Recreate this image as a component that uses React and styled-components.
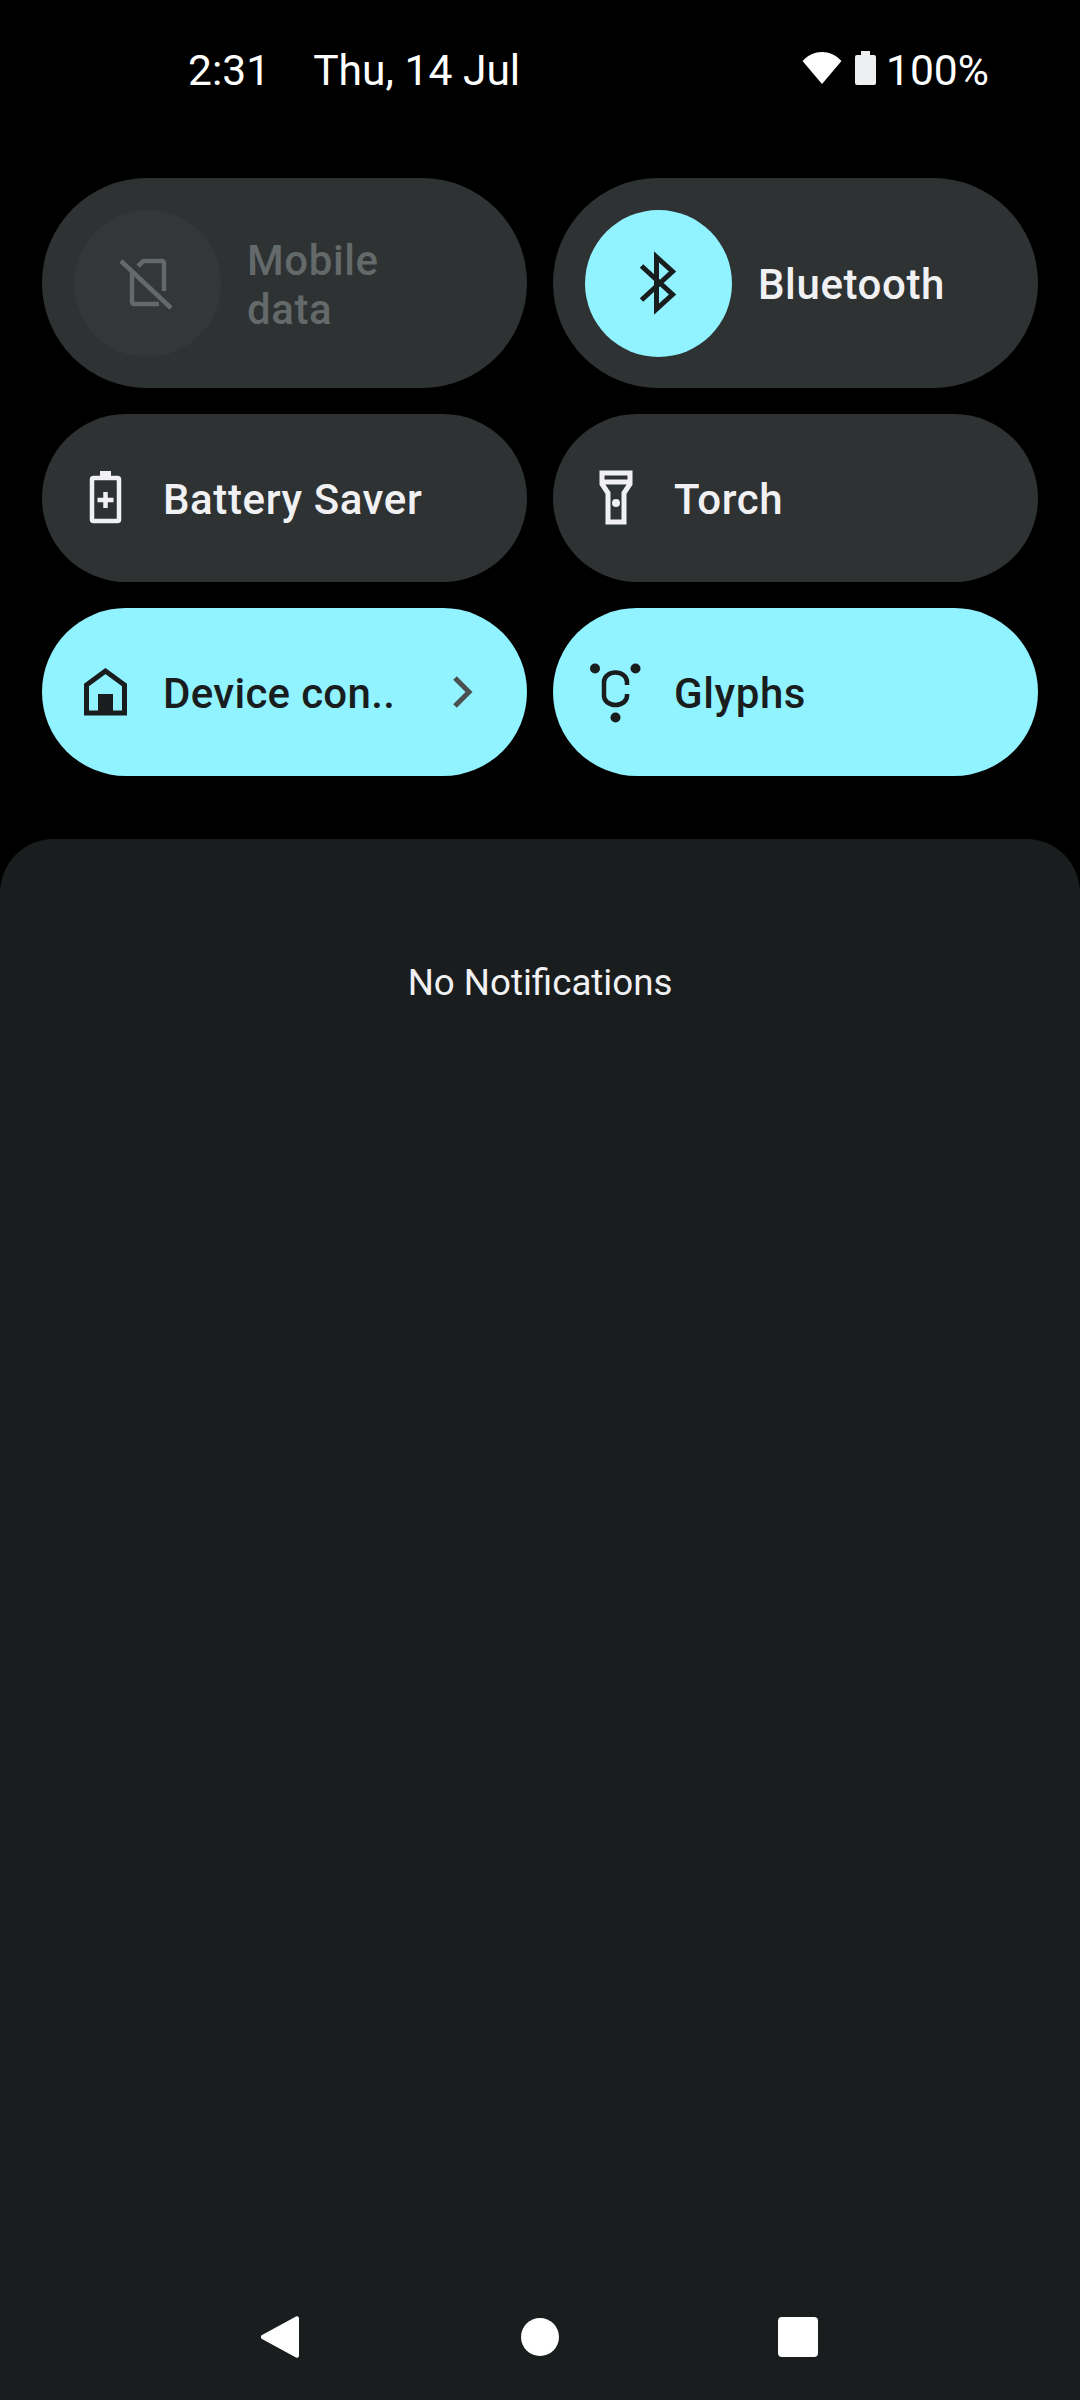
import React from "react";
import styled, { createGlobalStyle } from "styled-components";

const GlobalStyle = createGlobalStyle`
  html, body {
    margin: 0;
    padding: 0;
    background: #000;
  }
`;

const Page = styled.div`
  width: 1080px;
  height: 2400px;
  display: flex;
  flex-direction: column;
  background: #000;
  font-family: Roboto, "Liberation Sans", sans-serif;
  overflow: hidden;
`;

// status bar
const StatusBar = styled.div`
  height: 178px;
  box-sizing: border-box;
  padding: 46px 91px 0 188px;
  display: flex;
  justify-content: space-between;
  align-items: flex-start;
  color: #fff;
  font-size: 42.6px;
  line-height: 48px;
`;

const StatusLeft = styled.div`
  display: flex;
  gap: 43px;
`;

const StatusRight = styled.div`
  display: flex;
  align-items: center;
`;

const WifiIcon = styled.svg`
  width: 40px;
  height: 32px;
  margin-top: -4px;
  margin-right: 13px;
`;

const BatteryIcon = styled.svg`
  width: 21px;
  height: 34px;
  margin-top: -4px;
  margin-right: 10px;
`;

// quick settings tiles
const Tiles = styled.div`
  display: grid;
  grid-template-columns: 485px 485px;
  gap: 26px;
  padding: 0 42px;
  margin-bottom: 63px;
`;

const Tile = styled.div`
  height: ${(p) => (p.$large ? 210 : 168)}px;
  box-sizing: border-box;
  padding-left: ${(p) => (p.$large ? 32 : 27)}px;
  padding-right: 27px;
  border-radius: ${(p) => (p.$large ? 105 : 84)}px;
  background: ${(p) => (p.$on ? "#91f3ff" : "#2e3233")};
  display: flex;
  align-items: center;
  gap: ${(p) => (p.$large ? 26 : 22)}px;
`;

const IconCircle = styled.div`
  width: 147px;
  height: 147px;
  flex: none;
  border-radius: 50%;
  background: ${(p) => (p.$on ? "#91f3ff" : "#333738")};
  display: flex;
  align-items: center;
  justify-content: center;
`;

const TileIcon = styled.svg`
  width: 72px;
  height: 72px;
  flex: none;
`;

const Label = styled.div`
  flex: 1;
  padding-top: 3px;
  font-size: 42px;
  font-weight: 460;
  line-height: 49px;
  letter-spacing: ${(p) => (p.$tight ? 0.3 : 0.6)}px;
  color: ${(p) => (p.$on ? "#191d1e" : p.$disabled ? "#64696a" : "#f1f1f3")};
`;

const Chevron = styled.svg`
  width: 24px;
  height: 36px;
  flex: none;
  margin-right: 25px;
`;

// notification shade
const Panel = styled.div`
  flex: 1;
  display: flex;
  flex-direction: column;
  align-items: center;
  background: #191d1e;
  border-radius: 54px 54px 0 0;
`;

const EmptyText = styled.div`
  margin-top: 123px;
  font-size: 36.7px;
  line-height: 42px;
  color: #f1f1f3;
`;

const NavBar = styled.div`
  margin-top: auto;
  margin-bottom: 41px;
  margin-right: 1px;
  width: 557px;
  display: flex;
  justify-content: space-between;
  align-items: center;
`;

const BackIcon = styled.svg`
  width: 38px;
  height: 44px;
`;

const HomeDot = styled.div`
  width: 38px;
  height: 38px;
  margin-left: 2px;
  border-radius: 50%;
  background: #fff;
`;

const RecentsBox = styled.div`
  width: 40px;
  height: 40px;
  border-radius: 4px;
  background: #fff;
`;

const SimOff = () => (
  <TileIcon viewBox="0 0 72 72" fill="none" stroke="#64696a" strokeWidth="4.5">
    <path d="M26 19l5.5-5H50a2 2 0 0 1 2 2v28M20 24v31a2 2 0 0 0 2 2h25" />
    <path d="M9 14l50 47" />
  </TileIcon>
);

const BluetoothGlyph = () => (
  <TileIcon viewBox="0 0 72 72" fill="none" stroke="#191d1e" strokeWidth="5">
    <path d="M18.5 19l31 28.5L33.5 62V10l16 14.5L18.5 53" />
  </TileIcon>
);

const BatteryPlus = () => (
  <TileIcon viewBox="0 0 72 72" fill="none" stroke="#f1f1f3" strokeWidth="4.5">
    <rect x="23" y="16" width="27" height="43" rx="1.5" />
    <path d="M31 9h11v6H31z" fill="#f1f1f3" stroke="none" />
    <path d="M28.5 38h16M36.5 30v16" />
  </TileIcon>
);

const TorchGlyph = () => (
  <TileIcon viewBox="0 0 72 72" fill="none" stroke="#f1f1f3" strokeWidth="5">
    <path d="M22 11h28v11l-6 9v29H28V31l-6-9z" />
    <path d="M22 20h28" />
    <circle cx="36" cy="41" r="4" fill="#f1f1f3" stroke="none" />
  </TileIcon>
);

const HomeGlyph = () => (
  <TileIcon viewBox="0 0 72 72" fill="none" stroke="#191d1e" strokeWidth="5">
    <path d="M36.5 15L17.5 29v28h38V29z" />
    <path d="M29 38h15v17H29z" fill="#191d1e" stroke="none" />
  </TileIcon>
);

const GlyphsGlyph = () => (
  <TileIcon viewBox="0 0 72 72" fill="none" stroke="#191d1e" strokeWidth="4.5">
    <path d="M47 29v-3a11.5 9.5 0 0 0-23 0v14a11.5 9 0 0 0 23 0v-2" />
    <circle cx="15" cy="12.5" r="5" fill="#191d1e" stroke="none" />
    <circle cx="55.5" cy="12.5" r="5" fill="#191d1e" stroke="none" />
    <circle cx="35.5" cy="61.5" r="5" fill="#191d1e" stroke="none" />
  </TileIcon>
);

const App = () => {
  return (
    <Page>
      <GlobalStyle />
      <StatusBar>
        <StatusLeft>
          <span>2:31</span>
          <span>Thu, 14 Jul</span>
        </StatusLeft>
        <StatusRight>
          <WifiIcon viewBox="0 0 40 32">
            <path d="M20 32L.5 9C6 3 13 0 20 0s14 3 19.5 9z" fill="#fff" />
          </WifiIcon>
          <BatteryIcon viewBox="0 0 21 34">
            <path
              d="M6 0h9v4h4a2 2 0 0 1 2 2v26a2 2 0 0 1-2 2H2a2 2 0 0 1-2-2V6a2 2 0 0 1 2-2h4z"
              fill="#eeeff1"
            />
          </BatteryIcon>
          <span>100%</span>
        </StatusRight>
      </StatusBar>

      <Tiles>
        <Tile $large>
          <IconCircle>
            <SimOff />
          </IconCircle>
          <Label $disabled>
            Mobile
            <br />
            data
          </Label>
        </Tile>
        <Tile $large>
          <IconCircle $on>
            <BluetoothGlyph />
          </IconCircle>
          <Label>Bluetooth</Label>
        </Tile>
        <Tile>
          <BatteryPlus />
          <Label>Battery Saver</Label>
        </Tile>
        <Tile>
          <TorchGlyph />
          <Label>Torch</Label>
        </Tile>
        <Tile $on>
          <HomeGlyph />
          <Label $on $tight>Device con..</Label>
          <Chevron viewBox="0 0 24 36" fill="none" stroke="#4a4f50" strokeWidth="5">
            <path d="M4 4l14 14L4 32" />
          </Chevron>
        </Tile>
        <Tile $on>
          <GlyphsGlyph />
          <Label $on>Glyphs</Label>
        </Tile>
      </Tiles>

      <Panel>
        <EmptyText>No Notifications</EmptyText>
        <NavBar>
          <BackIcon viewBox="0 0 38 44">
            <path
              d="M35 1.5a2 2 0 0 1 3 1.7v37.6a2 2 0 0 1-3 1.7L1 24a2.4 2.4 0 0 1 0-4z"
              fill="#fff"
            />
          </BackIcon>
          <HomeDot />
          <RecentsBox />
        </NavBar>
      </Panel>
    </Page>
  );
};

export default App;
